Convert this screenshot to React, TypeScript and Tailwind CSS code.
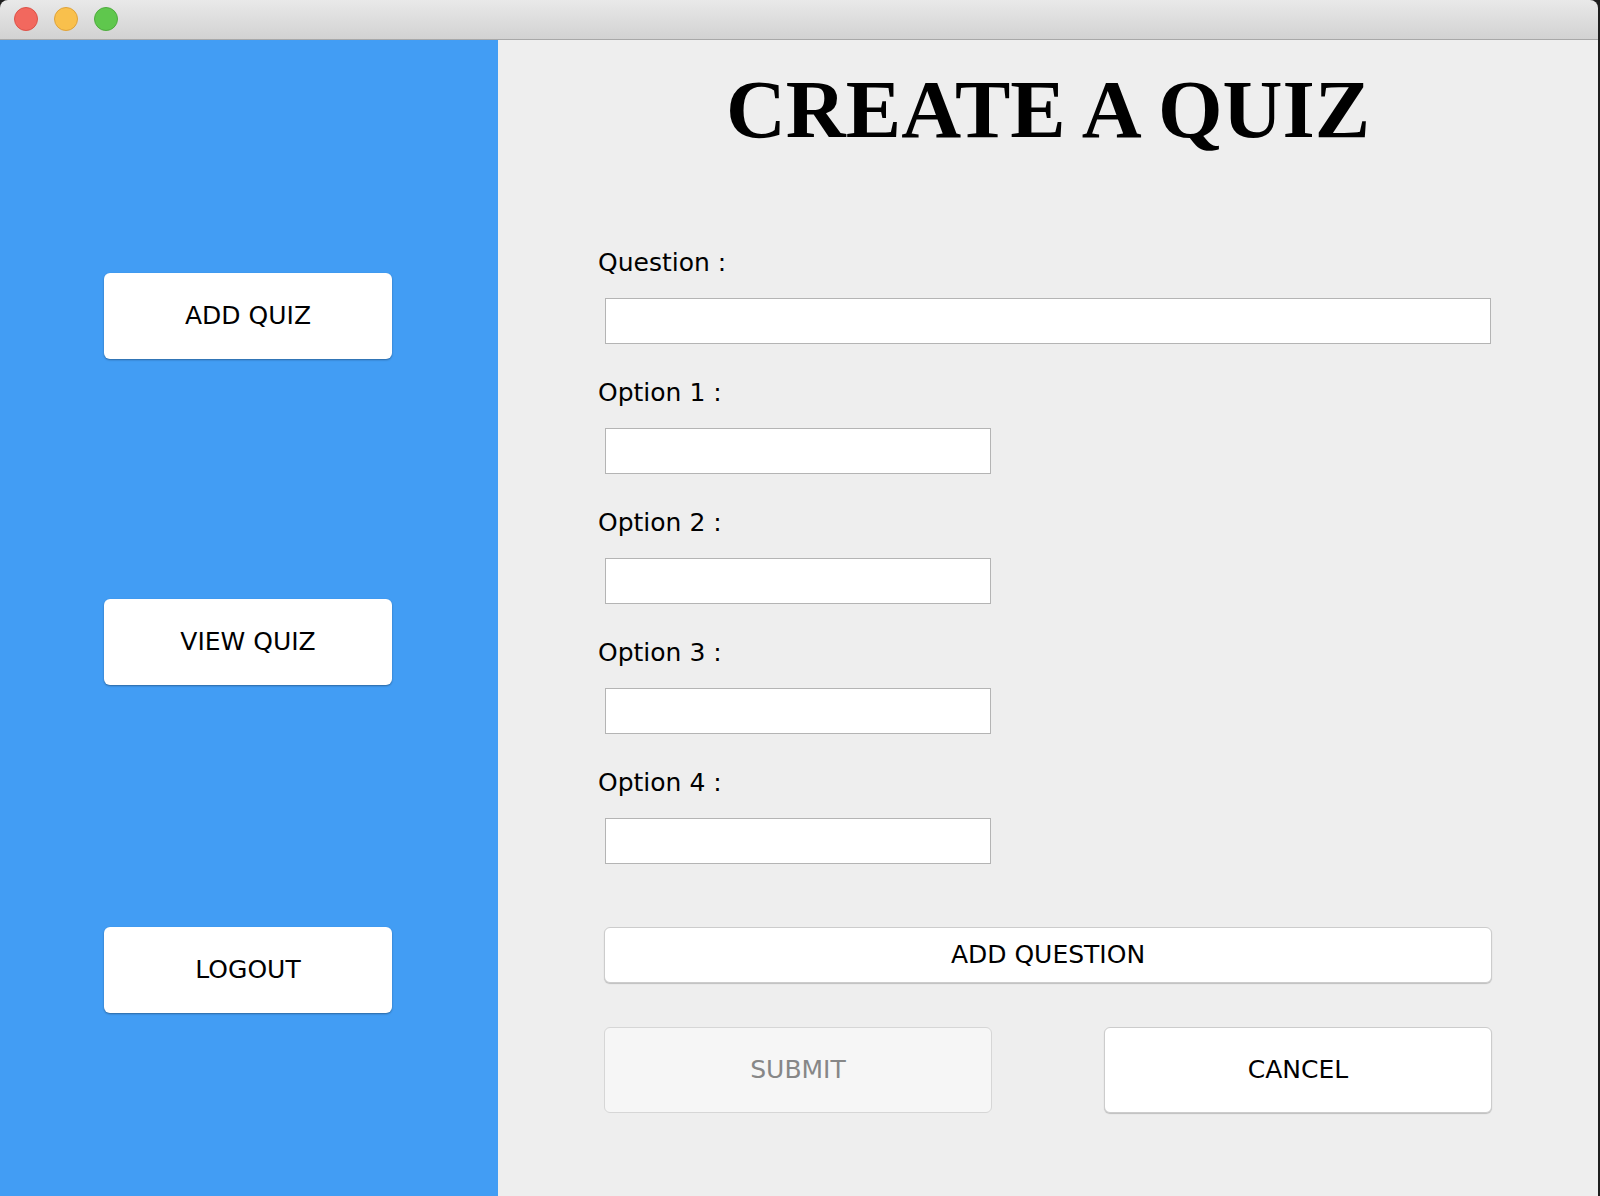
import React from "react";

const sans = { fontFamily: '"DejaVu Sans", "Liberation Sans", sans-serif' };

function SideButton({ label, className }: { label: string; className: string }) {
  return (
    <button
      className={`ml-[104px] flex h-[86px] w-[288px] items-center justify-center rounded-[6px] bg-white text-[25px] text-black shadow-[0_1px_2px_rgba(0,0,0,0.35)] ${className}`}
      style={sans}
    >
      {label}
    </button>
  );
}

function Field({ label, wide, first }: { label: string; wide?: boolean; first?: boolean }) {
  return (
    <div className={first ? "mt-[97px]" : "mt-[34px]"}>
      <div className="ml-[100px] h-[29px] text-[25px] leading-[29px] text-black" style={sans}>
        {label}
      </div>
      <input
        type="text"
        className={`ml-[107px] mt-[21px] block h-[46px] border border-[#b4b4b4] bg-white outline-none ${
          wide ? "w-[886px]" : "w-[386px]"
        }`}
      />
    </div>
  );
}

export default function App() {
  return (
    <div className="flex h-[1196px] w-[1600px] bg-[#1e1e1e]">
      <div className="flex h-full w-[1598px] flex-col overflow-hidden rounded-t-[8px]">
        {/* Title bar */}
        <div className="flex h-[40px] shrink-0 items-center gap-[16px] border-b border-[#a8a8a8] bg-gradient-to-b from-[#e9e9e9] to-[#d2d2d2] pb-[1px] pl-[14px]">
          <span className="h-[24px] w-[24px] rounded-full border border-[#dc5248] bg-[#f2685e]" />
          <span className="h-[24px] w-[24px] rounded-full border border-[#dea23a] bg-[#f9c04c]" />
          <span className="h-[24px] w-[24px] rounded-full border border-[#4eab3e] bg-[#5fc74d]" />
        </div>

        <div className="flex flex-1">
          {/* Sidebar */}
          <div className="flex w-[498px] shrink-0 flex-col bg-[#429df4]">
            <SideButton label="ADD QUIZ" className="mt-[233px]" />
            <SideButton label="VIEW QUIZ" className="mt-[240px]" />
            <SideButton label="LOGOUT" className="mt-[242px]" />
          </div>

          {/* Form */}
          <div className="flex flex-1 flex-col bg-[#eeeeee]">
            <h1
              className="mt-[28px] h-[83px] text-center text-[83px] font-bold leading-[83px] text-black"
              style={{ fontFamily: '"Liberation Serif", "Times New Roman", serif' }}
            >
              CREATE A QUIZ
            </h1>

            <Field label="Question :" wide first />
            <Field label="Option 1 :" />
            <Field label="Option 2 :" />
            <Field label="Option 3 :" />
            <Field label="Option 4 :" />

            <button
              className="ml-[106px] mt-[63px] flex h-[56px] w-[888px] items-center justify-center rounded-[6px] border border-[#cccccc] bg-white text-[25px] text-black shadow-[0_1px_1px_rgba(0,0,0,0.2)]"
              style={sans}
            >
              ADD QUESTION
            </button>

            <div className="ml-[106px] mt-[44px] flex w-[888px] justify-between">
              <button
                disabled
                className="flex h-[86px] w-[388px] items-center justify-center rounded-[6px] border border-[#d6d6d6] bg-[#f6f6f6] text-[25px] text-[#878787]"
                style={sans}
              >
                SUBMIT
              </button>
              <button
                className="flex h-[86px] w-[388px] items-center justify-center rounded-[6px] border border-[#cccccc] bg-white text-[25px] text-black shadow-[0_1px_1px_rgba(0,0,0,0.2)]"
                style={sans}
              >
                CANCEL
              </button>
            </div>
          </div>
        </div>
      </div>
    </div>
  );
}
